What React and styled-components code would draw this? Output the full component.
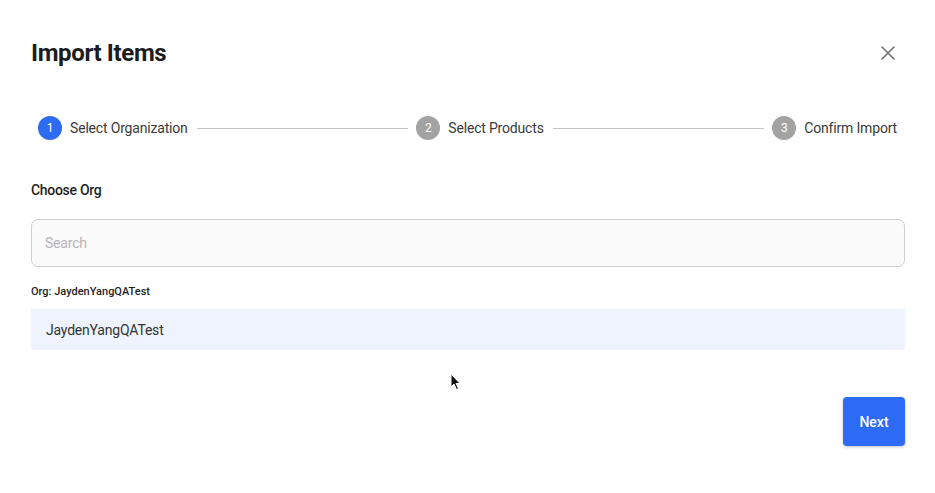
import React from 'react';
import styled, { createGlobalStyle } from 'styled-components';

const GlobalStyle = createGlobalStyle`
  html, body {
    margin: 0;
    padding: 0;
    background: #ffffff;
  }
  body {
    font-family: Roboto, "Liberation Sans", Arial, sans-serif;
    color: #222;
  }
`;

const Dialog = styled.div`
  position: relative;
  width: 935px;
  height: 493px;
  box-sizing: border-box;
  padding: 36px 30px 0 31px;
  display: flex;
  flex-direction: column;
  background: #fff;
  overflow: hidden;
`;

const Header = styled.div`
  display: flex;
  align-items: center;
  justify-content: space-between;
  height: 34px;
`;

const Title = styled.h2`
  margin: 0;
  font-size: 24px;
  font-weight: 700;
  line-height: 34px;
  color: #1c1c1c;
  letter-spacing: -0.35px;
`;

const CloseButton = styled.button`
  display: flex;
  align-items: center;
  justify-content: center;
  width: 24px;
  height: 24px;
  padding: 0;
  margin-right: 5px;
  border: none;
  background: transparent;
  color: #6f6f6f;
  cursor: pointer;
`;

const Stepper = styled.div`
  display: flex;
  align-items: center;
  margin-top: 46px;
  padding: 0 8px 0 7px;
  height: 24px;
`;

const Step = styled.div`
  display: flex;
  align-items: center;
  gap: 8px;
  flex-shrink: 0;
`;

const StepCircle = styled.div`
  width: 24px;
  height: 24px;
  border-radius: 50%;
  display: flex;
  align-items: center;
  justify-content: center;
  font-size: 12px;
  color: #fff;
  background: ${(p) => (p.active ? '#2d6bf3' : '#a3a3a3')};
`;

const StepLabel = styled.span`
  font-size: 14px;
  color: #3a3a3a;
  line-height: 20px;
  letter-spacing: -0.18px;
`;

const Connector = styled.div`
  flex: 1;
  height: 1px;
  margin: 0 8px 0 9px;
  background: #c4c4c4;
`;

const FieldLabel = styled.div`
  margin-top: 40px;
  font-size: 14px;
  font-weight: 500;
  line-height: 20px;
  color: #1f1f1f;
  letter-spacing: -0.3px;
`;

const SearchInput = styled.input`
  margin-top: 19px;
  height: 48px;
  box-sizing: border-box;
  width: 100%;
  padding: 0 13px;
  border: 1px solid #cfcfcf;
  border-radius: 7px;
  background: #fafafb;
  font-family: inherit;
  font-size: 14px;
  letter-spacing: -0.2px;
  color: #333;
  outline: none;

  &::placeholder {
    color: #b5b5b5;
  }
`;

const SelectedLabel = styled.div`
  margin-top: 17px;
  font-size: 11px;
  font-weight: 500;
  line-height: 16px;
  color: #1f1f1f;
`;

const OrgList = styled.ul`
  list-style: none;
  margin: 9px 0 0;
  padding: 0;
`;

const OrgItem = styled.li`
  height: 41px;
  display: flex;
  align-items: center;
  padding: 0 15px;
  font-size: 14px;
  letter-spacing: -0.2px;
  color: #333;
  background: ${(p) => (p.selected ? '#eef3fd' : 'transparent')};
`;

const Footer = styled.div`
  display: flex;
  justify-content: flex-end;
  margin-top: 47px;
`;

const NextButton = styled.button`
  width: 62px;
  height: 49px;
  border: none;
  border-radius: 4px;
  background: #2e6bf5;
  color: #fff;
  font-family: inherit;
  font-size: 14px;
  font-weight: 500;
  box-shadow: 0 1px 3px rgba(0, 0, 0, 0.25);
  cursor: pointer;
`;

const Cursor = styled.svg`
  position: absolute;
  left: 450px;
  top: 373px;
`;

const steps = ['Select Organization', 'Select Products', 'Confirm Import'];

export default function App() {
  return (
    <>
      <GlobalStyle />
      <Dialog>
        <Header>
          <Title>Import Items</Title>
          <CloseButton aria-label="Close">
            <svg width="16" height="16" viewBox="0 0 16 16">
              <path d="M2 2 L14 14 M14 2 L2 14" stroke="currentColor" strokeWidth="1.6" strokeLinecap="round" />
            </svg>
          </CloseButton>
        </Header>

        <Stepper>
          {steps.map((label, i) => (
            <React.Fragment key={label}>
              {i > 0 && <Connector />}
              <Step>
                <StepCircle active={i === 0}>{i + 1}</StepCircle>
                <StepLabel>{label}</StepLabel>
              </Step>
            </React.Fragment>
          ))}
        </Stepper>

        <FieldLabel>Choose Org</FieldLabel>
        <SearchInput placeholder="Search" />
        <SelectedLabel>Org: JaydenYangQATest</SelectedLabel>
        <OrgList>
          <OrgItem selected>JaydenYangQATest</OrgItem>
        </OrgList>

        <Footer>
          <NextButton>Next</NextButton>
        </Footer>

        <Cursor width="12" height="18" viewBox="0 0 12 18">
          <path d="M1 1 L1 14 L4 11 L6.5 16.5 L8.5 15.5 L6 10.5 L10 10.5 Z" fill="#111" stroke="#fff" strokeWidth="1" />
        </Cursor>
      </Dialog>
    </>
  );
}
